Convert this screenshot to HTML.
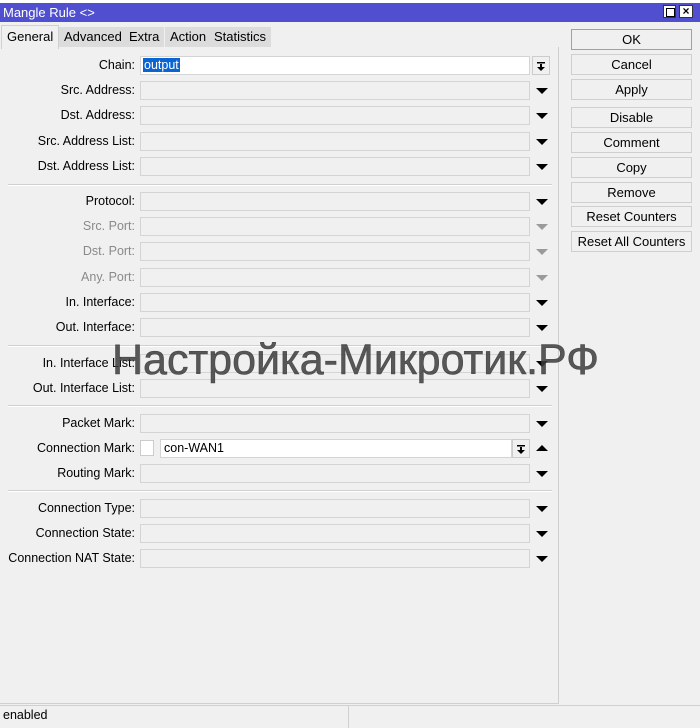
<!DOCTYPE html>
<html><head><meta charset="utf-8"><style>
body{margin:0;width:700px;height:728px;background:#f0f0f0;font-family:"Liberation Sans",sans-serif;font-size:12.5px;position:relative;overflow:hidden;color:#000}
.a{position:absolute}
.lbl{position:absolute;right:565px;width:200px;text-align:right;line-height:20px}
.in{position:absolute;left:140px;width:390px;height:19px;border:1px solid #d4d4d4;background:#f0f0f0;box-sizing:border-box}
.ar{position:absolute;left:536px;width:0;height:0;border-left:6px solid transparent;border-right:6px solid transparent;border-top:6px solid #000}
.dis{color:#8a8a8a}
.ar.dis{border-top-color:#9a9a9a}
.sep{position:absolute;left:8px;width:544px;height:0;border-top:1px solid #d0d0d0;border-bottom:1px solid #fff}
.btn{position:absolute;left:571px;width:121px;height:21px;border:1px solid #cfcfcf;background:#f0f0f0;box-sizing:border-box;text-align:center;line-height:19px;font-size:13px}
.tab{position:absolute;top:27px;height:20px;line-height:20px;background:#dcdcdc;padding:0 5px;font-size:13px}
.dd{position:absolute;width:18px;height:19px;border:1px solid #ccc;background:#f0f0f0;box-sizing:border-box}
</style></head><body>
<div class="a" style="left:0;top:0;width:700px;height:3px;background:#fff"></div>
<div class="a" style="left:0;top:3px;width:700px;height:19px;background:#4f4fcf;color:#fff;font-size:13px;line-height:19px;padding-left:3px;box-sizing:border-box">Mangle Rule &lt;&gt;</div>
<div class="a" style="left:663px;top:5px;width:13px;height:13px;background:#fff;border:1px solid #333;box-sizing:border-box"><div class="a" style="left:2px;top:2px;width:7px;height:7px;border:1px solid #000"></div></div>
<div class="a" style="left:679px;top:5px;width:14px;height:13px;background:#fff;border:1px solid #333;box-sizing:border-box;font-size:12px;line-height:11px;text-align:center;font-weight:bold">×</div>
<div class="a" style="left:0;top:47px;width:559px;height:657px;border-right:1px solid #cfcfcf;border-bottom:1px solid #cfcfcf;box-sizing:border-box"></div>
<div class="tab" style="left:1px;top:25px;height:23px;background:#f0f0f0;border:1px solid #d0d0d0;border-bottom:none;line-height:22px">General</div>
<div class="tab" style="left:59px">Advanced</div>
<div class="tab" style="left:124px">Extra</div>
<div class="tab" style="left:165px">Action</div>
<div class="tab" style="left:209px">Statistics</div>

<div class="lbl" style="top:55px">Chain:</div>
<div class="in" style="top:56px;background:#fff;width:390px"><span style="background:#0a64d2;color:#fff;margin-left:2px;line-height:17px;padding:0 1px">output</span></div>
<div class="dd" style="left:532px;top:56px"><svg width="16" height="17" style="position:absolute;left:0;top:0"><rect x="4" y="5" width="8" height="1.5" fill="#000"/><rect x="7" y="7" width="2" height="3" fill="#000"/><polygon points="4,10 12,10 8,14" fill="#000"/></svg></div>

<div class="lbl" style="top:80px">Src. Address:</div><div class="in" style="top:81px"></div><div class="ar" style="top:88px"></div>
<div class="lbl" style="top:105px">Dst. Address:</div><div class="in" style="top:106px"></div><div class="ar" style="top:113px"></div>
<div class="lbl" style="top:131px">Src. Address List:</div><div class="in" style="top:132px"></div><div class="ar" style="top:139px"></div>
<div class="lbl" style="top:156px">Dst. Address List:</div><div class="in" style="top:157px"></div><div class="ar" style="top:164px"></div>
<div class="sep" style="top:184px"></div>
<div class="lbl" style="top:191px">Protocol:</div><div class="in" style="top:192px"></div><div class="ar" style="top:199px"></div>
<div class="lbl dis" style="top:216px">Src. Port:</div><div class="in" style="top:217px"></div><div class="ar dis" style="top:224px"></div>
<div class="lbl dis" style="top:241px">Dst. Port:</div><div class="in" style="top:242px"></div><div class="ar dis" style="top:249px"></div>
<div class="lbl dis" style="top:267px">Any. Port:</div><div class="in" style="top:268px"></div><div class="ar dis" style="top:275px"></div>
<div class="lbl" style="top:292px">In. Interface:</div><div class="in" style="top:293px"></div><div class="ar" style="top:300px"></div>
<div class="lbl" style="top:317px">Out. Interface:</div><div class="in" style="top:318px"></div><div class="ar" style="top:325px"></div>
<div class="sep" style="top:345px"></div>
<div class="lbl" style="top:353px">In. Interface List:</div><div class="in" style="top:354px"></div><div class="ar" style="top:361px"></div>
<div class="lbl" style="top:378px">Out. Interface List:</div><div class="in" style="top:379px"></div><div class="ar" style="top:386px"></div>
<div class="sep" style="top:405px"></div>
<div class="lbl" style="top:413px">Packet Mark:</div><div class="in" style="top:414px"></div><div class="ar" style="top:421px"></div>
<div class="lbl" style="top:438px">Connection Mark:</div>
<div class="a" style="left:140px;top:440px;width:14px;height:16px;background:#fff;border:1px solid #ccc;box-sizing:border-box"></div>
<div class="in" style="left:160px;width:352px;top:439px;background:#fff;padding-left:3px;line-height:17px">con-WAN1</div>
<div class="dd" style="left:512px;top:439px"><svg width="16" height="17" style="position:absolute;left:0;top:0"><rect x="4" y="5" width="8" height="1.5" fill="#000"/><rect x="7" y="7" width="2" height="3" fill="#000"/><polygon points="4,10 12,10 8,14" fill="#000"/></svg></div>
<div class="a" style="left:536px;top:445px;border-left:6px solid transparent;border-right:6px solid transparent;border-bottom:6px solid #000"></div>
<div class="lbl" style="top:463px">Routing Mark:</div><div class="in" style="top:464px"></div><div class="ar" style="top:471px"></div>
<div class="sep" style="top:490px"></div>
<div class="lbl" style="top:498px">Connection Type:</div><div class="in" style="top:499px"></div><div class="ar" style="top:506px"></div>
<div class="lbl" style="top:523px">Connection State:</div><div class="in" style="top:524px"></div><div class="ar" style="top:531px"></div>
<div class="lbl" style="top:548px">Connection NAT State:</div><div class="in" style="top:549px"></div><div class="ar" style="top:556px"></div>

<div class="a" style="left:112px;top:335px;font-size:43px;line-height:50px;color:rgba(60,60,60,0.85);-webkit-text-stroke:0.6px rgba(60,60,60,0.85);white-space:nowrap;letter-spacing:0px">Настройка-Микротик.РФ</div>

<div class="btn" style="top:29px;border-color:#a0a0a0">OK</div>
<div class="btn" style="top:54px">Cancel</div>
<div class="btn" style="top:79px">Apply</div>
<div class="btn" style="top:107px">Disable</div>
<div class="btn" style="top:132px">Comment</div>
<div class="btn" style="top:157px">Copy</div>
<div class="btn" style="top:182px">Remove</div>
<div class="btn" style="top:206px">Reset Counters</div>
<div class="btn" style="top:231px">Reset All Counters</div>

<div class="a" style="left:0;top:705px;width:700px;height:1px;background:#d0d0d0"></div>
<div class="a" style="left:348px;top:706px;width:1px;height:22px;background:#d0d0d0"></div>
<div class="a" style="left:3px;top:708px;font-size:12.5px">enabled</div>
</body></html>
